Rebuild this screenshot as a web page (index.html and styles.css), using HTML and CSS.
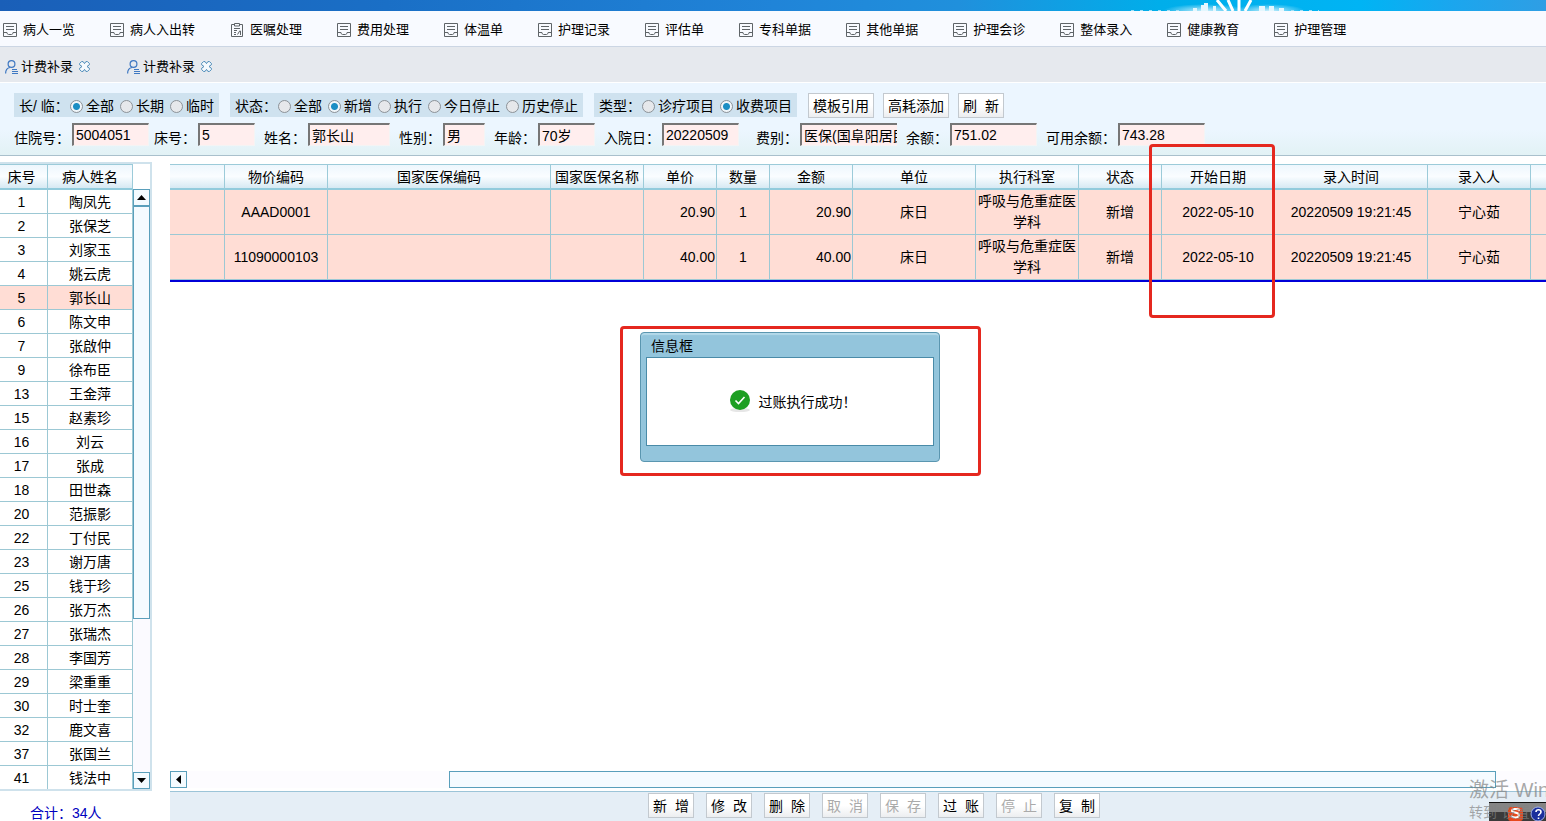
FILE: index.html
```html
<!DOCTYPE html>
<html lang="zh-CN">
	<head>
		<meta charset="UTF-8">
		<title>计费补录</title>
		<link rel="stylesheet" href="styles.css">
	</head>
	<body>
		<!-- 公用图标 -->
		<svg class="defs" width="0" height="0">
			<symbol id="i-doc" viewBox="0 0 14 14">
				<path d="M.5 .5h13v13H.5zM3 3.500h8M3 6.500h8M.5 9.500h3.500v1l1.500 1h3l1.500-1v-1h3.500" fill="none" stroke="#5f6468"/>
			</symbol>
			<symbol id="i-clip" viewBox="0 0 14 14">
				<path d="M4 1.500H1.500v12h11v-12H10M4.500 .5h5v2.500h-5z" fill="none" stroke="#5f6468"/>
				<path d="M4 5.500h6M4 7.500h3M4 9.500h2M4 11.500h2M7.500 11.500l2.500-4M10.500 8v4" fill="none" stroke="#5f6468"/>
			</symbol>
			<symbol id="i-user" viewBox="0 0 13 14">
				<circle cx="6.500" cy="4" r="3.400" fill="none" stroke="#3f78c2" stroke-width="1.200"/>
				<path d="M.6 13.500c0-3.500 1.800-5.500 4.400-6" fill="none" stroke="#3f78c2" stroke-width="1.200"/>
				<path d="M7 9.500h5M7 11.500h6M7 13.500h6" fill="none" stroke="#3f78c2"/>
			</symbol>
			<symbol id="i-close" viewBox="0 0 11 11">
				<path d="M2.500 .6h1.600l1.400 2 1.400-2h1.600l1.900 1.900v1.200L8 5.500l2.400 1.800v1.200l-1.900 1.900H6.900l-1.400-2-1.400 2H2.500L.6 8.500V7.300L3 5.500.6 3.700V2.500z" fill="#f4f9fd" stroke="#4a8ab8"/>
			</symbol>
		</svg>

		<div class="banner">
			<svg class="banner-light" viewBox="0 0 220 11" width="220" height="11">
				<defs>
					<radialGradient id="glow">
						<stop offset="0" stop-color="#fff" stop-opacity=".8"/>
						<stop offset="1" stop-color="#fff" stop-opacity="0"/>
					</radialGradient>
				</defs>
				<ellipse cx="78" cy="11" rx="42" ry="7" fill="url(#glow)"/>
				<ellipse cx="142" cy="11" rx="36" ry="7" fill="url(#glow)"/>
				<path d="M66 11V8h4v3M74 11V5h3V3h4v8M86 11V6h3v5M132 11V6h6v5M142 11V6h5v5M152 11V8h5v3" fill="#e4f7fe"/>
				<path d="M99 11L90 0M106 11L101 0M112 11V0M118 11l6-11" fill="none" stroke="#fff" stroke-width="3"/>
				<path d="M4 10.500h50M164 10.500h28" stroke="#9fe0f8" stroke-dasharray="3 6"/>
			</svg>
		</div>

		<nav class="menu">
			<a href="#"><svg><use href="#i-doc"/></svg>病人一览</a>
			<a href="#"><svg><use href="#i-doc"/></svg>病人入出转</a>
			<a href="#"><svg><use href="#i-clip"/></svg>医嘱处理</a>
			<a href="#"><svg><use href="#i-doc"/></svg>费用处理</a>
			<a href="#"><svg><use href="#i-doc"/></svg>体温单</a>
			<a href="#"><svg><use href="#i-doc"/></svg>护理记录</a>
			<a href="#"><svg><use href="#i-doc"/></svg>评估单</a>
			<a href="#"><svg><use href="#i-doc"/></svg>专科单据</a>
			<a href="#"><svg><use href="#i-doc"/></svg>其他单据</a>
			<a href="#"><svg><use href="#i-doc"/></svg>护理会诊</a>
			<a href="#"><svg><use href="#i-doc"/></svg>整体录入</a>
			<a href="#"><svg><use href="#i-doc"/></svg>健康教育</a>
			<a href="#"><svg><use href="#i-doc"/></svg>护理管理</a>
		</nav>

		<div class="tabs">
			<div class="tab">
				<a href="#"><svg class="user"><use href="#i-user"/></svg>计费补录</a>
				<button type="button" class="close" aria-label="关闭"><svg><use href="#i-close"/></svg></button>
			</div>
			<div class="tab">
				<a href="#"><svg class="user"><use href="#i-user"/></svg>计费补录</a>
				<button type="button" class="close" aria-label="关闭"><svg><use href="#i-close"/></svg></button>
			</div>
		</div>

		<form class="filter">
			<div class="filter-row">
				<div class="group" role="radiogroup" aria-label="长/临">
					<span class="group-name long">长/ 临：</span>
					<label><input type="radio" name="term" checked>全部</label>
					<label><input type="radio" name="term">长期</label>
					<label><input type="radio" name="term">临时</label>
				</div>
				<div class="group" role="radiogroup" aria-label="状态">
					<span class="group-name">状态：</span>
					<label><input type="radio" name="state">全部</label>
					<label><input type="radio" name="state" checked>新增</label>
					<label><input type="radio" name="state">执行</label>
					<label><input type="radio" name="state">今日停止</label>
					<label><input type="radio" name="state">历史停止</label>
				</div>
				<div class="group" role="radiogroup" aria-label="类型">
					<span class="group-name">类型：</span>
					<label><input type="radio" name="kind">诊疗项目</label>
					<label><input type="radio" name="kind" checked>收费项目</label>
				</div>
				<div class="filter-btns">
					<button type="button" class="btn">模板引用</button>
					<button type="button" class="btn">高耗添加</button>
					<button type="button" class="btn">刷&nbsp; 新</button>
				</div>
			</div>
			<div class="info-row">
				<div class="field"><label for="zyh">住院号：</label><input id="zyh" class="w77" type="text" value="5004051"></div>
				<div class="field near"><label for="ch">床号：</label><input id="ch" class="w57" type="text" value="5"></div>
				<div class="field"><label for="xm">姓名：</label><input id="xm" class="w82" type="text" value="郭长山"></div>
				<div class="field"><label for="xb">性别：</label><input id="xb" class="w42" type="text" value="男"></div>
				<div class="field"><label for="nl">年龄：</label><input id="nl" class="w57" type="text" value="70岁"></div>
				<div class="field"><label for="ryr">入院日：</label><input id="ryr" class="w77" type="text" value="20220509"></div>
				<div class="field far"><label for="fb">费别：</label><input id="fb" class="w97" type="text" value="医保(国阜阳居民)"></div>
				<div class="field"><label for="ye">余额：</label><input id="ye" class="w87" type="text" value="751.02"></div>
				<div class="field"><label for="kyye">可用余额：</label><input id="kyye" class="w87" type="text" value="743.28"></div>
			</div>
		</form>

		<div class="main">
			<!-- 左侧病人列表 -->
			<div class="side">
				<div class="side-box">
					<div class="side-list">
						<table class="patients">
							<thead>
								<tr><th class="bed">床号</th><th>病人姓名</th></tr>
							</thead>
							<tbody>
								<tr><td>1</td><td>陶凤先</td></tr>
								<tr><td>2</td><td>张保芝</td></tr>
								<tr><td>3</td><td>刘家玉</td></tr>
								<tr><td>4</td><td>姚云虎</td></tr>
								<tr class="on"><td>5</td><td>郭长山</td></tr>
								<tr><td>6</td><td>陈文申</td></tr>
								<tr><td>7</td><td>张啟仲</td></tr>
								<tr><td>9</td><td>徐布臣</td></tr>
								<tr><td>13</td><td>王金萍</td></tr>
								<tr><td>15</td><td>赵素珍</td></tr>
								<tr><td>16</td><td>刘云</td></tr>
								<tr><td>17</td><td>张成</td></tr>
								<tr><td>18</td><td>田世森</td></tr>
								<tr><td>20</td><td>范振影</td></tr>
								<tr><td>22</td><td>丁付民</td></tr>
								<tr><td>23</td><td>谢万唐</td></tr>
								<tr><td>25</td><td>钱于珍</td></tr>
								<tr><td>26</td><td>张万杰</td></tr>
								<tr><td>27</td><td>张瑞杰</td></tr>
								<tr><td>28</td><td>李国芳</td></tr>
								<tr><td>29</td><td>梁重重</td></tr>
								<tr><td>30</td><td>时士奎</td></tr>
								<tr><td>32</td><td>鹿文喜</td></tr>
								<tr><td>37</td><td>张国兰</td></tr>
								<tr><td>41</td><td>钱法中</td></tr>
							</tbody>
						</table>
					</div>
					<div class="vbar">
						<button type="button" class="arrow" aria-label="向上"><svg viewBox="0 0 9 5" width="9" height="5"><path d="M0 5l4.500-5L9 5z"/></svg></button>
						<div class="vtrack"><div class="vthumb"></div></div>
						<button type="button" class="arrow" aria-label="向下"><svg viewBox="0 0 9 5" width="9" height="5"><path d="M0 0l4.500 5L9 0z"/></svg></button>
					</div>
				</div>
				<div class="total">合计：34人</div>
			</div>

			<!-- 右侧费用明细 -->
			<div class="content">
				<div class="grid-box">
					<table class="fees">
						<colgroup>
							<col class="c55"><col class="c103"><col class="c223"><col class="c93"><col class="c73"><col class="c53"><col class="c83"><col class="c123"><col class="c103"><col class="c83"><col class="c113"><col class="c153"><col class="c103"><col>
						</colgroup>
						<thead>
							<tr><th></th><th>物价编码</th><th>国家医保编码</th><th>国家医保名称</th><th>单价</th><th>数量</th><th>金额</th><th>单位</th><th>执行科室</th><th>状态</th><th>开始日期</th><th>录入时间</th><th>录入人</th><th></th></tr>
						</thead>
						<tbody>
							<tr><td></td><td>AAAD0001</td><td></td><td></td><td class="num">20.90</td><td>1</td><td class="num">20.90</td><td>床日</td><td>呼吸与危重症医学科</td><td>新增</td><td>2022-05-10</td><td>20220509 19:21:45</td><td>宁心茹</td><td></td></tr>
							<tr><td></td><td>11090000103</td><td></td><td></td><td class="num">40.00</td><td>1</td><td class="num">40.00</td><td>床日</td><td>呼吸与危重症医学科</td><td>新增</td><td>2022-05-10</td><td>20220509 19:21:45</td><td>宁心茹</td><td></td></tr>
						</tbody>
					</table>
				</div>
				<div class="hbar">
					<button type="button" class="arrow" aria-label="向左"><svg viewBox="0 0 5 9" width="5" height="9"><path d="M5 0L0 4.500 5 9z"/></svg></button>
					<div class="htrack"><div class="hthumb"></div></div>
				</div>
				<div class="actions">
					<button type="button" class="btn">新&nbsp; 增</button>
					<button type="button" class="btn">修&nbsp; 改</button>
					<button type="button" class="btn">删&nbsp; 除</button>
					<button type="button" class="btn" disabled>取&nbsp; 消</button>
					<button type="button" class="btn" disabled>保&nbsp; 存</button>
					<button type="button" class="btn">过&nbsp; 账</button>
					<button type="button" class="btn" disabled>停&nbsp; 止</button>
					<button type="button" class="btn">复&nbsp; 制</button>
				</div>
			</div>
		</div>

		<!-- 标注框 -->
		<div class="mark mark-date"></div>
		<div class="mark mark-msg">
			<div class="dialog" role="dialog" aria-labelledby="dlg">
				<div class="dialog-title" id="dlg">信息框</div>
				<div class="dialog-body">
					<svg viewBox="0 0 22 24" width="22" height="24">
						<ellipse cx="11" cy="20" rx="10" ry="2" fill="#e6e6e6"/>
						<circle cx="11" cy="10" r="10" fill="#1d9f22"/>
						<path d="M6.500 10.500l3 3L15.500 7" fill="none" stroke="#fff" stroke-width="1.600"/>
					</svg>
					<span>过账执行成功！</span>
				</div>
			</div>
		</div>

		<div class="tray">
			<svg viewBox="0 0 57 19" width="57" height="19">
				<rect width="57" height="19" fill="#111"/>
				<rect y="1" width="57" height="9" fill="#858585"/>
				<rect y="10" width="57" height="9" fill="#3a3a3a"/>
				<rect x="19" y="5" width="15" height="14" rx="3" fill="#e8481c"/>
				<path d="M31 8c-4-2-8-1-8 1s7 1 7 4-5 3-8 1" fill="none" stroke="#fff" stroke-width="2"/>
				<circle cx="49" cy="12" r="7" fill="#1b2f9c" stroke="#9fb0e8"/>
				<path d="M47 10c0-3 5-3 5 0 0 2-2.500 2-2.500 4M49.500 15.500v1.500" fill="none" stroke="#fff" stroke-width="1.600"/>
			</svg>
		</div>
		<div class="watermark">
			<p class="wm-big">激活 Win</p>
			<p class="wm-small">转到“设置</p>
		</div>
	</body>
</html>
```

FILE: styles.css
```css
*{
	padding: 0;
	margin: 0;
	box-sizing: border-box;
}
body{
	position: relative;
	display: flex;
	flex-direction: column;
	height: 100vh;
	overflow: hidden;
	background: #fff;
	color: #000;
	font: 14px/20px "Liberation Sans", "Noto Sans CJK SC", sans-serif;
}
a{
	color: #000;
	text-decoration: none;
}
button, input{
	font: inherit;
	color: inherit;
}
.defs{
	position: absolute;
}

/* 顶部 */
.banner{
	position: relative;
	flex: none;
	height: 11px;
	overflow: hidden;
	background: linear-gradient(90deg, #1a5fb8 0%, #1a6fc6 25%, #2084d8 50%, #2090dc 62%, #00aeea 75%, #00b4f4 88%, #1ba6ee 94%, #2f9ee4 100%);
}
.banner-light{
	position: absolute;
	top: 0;
	left: 73%;
	margin-left: -2px;
}
.menu{
	display: flex;
	flex: none;
	gap: 35px;
	height: 36px;
	padding: 2px 3px 0;
	background: #f8faff;
	border-bottom: 1px solid #ccd6e4;
	font-size: 13px;
}
.menu a{
	display: flex;
	flex: none;
	align-items: center;
	gap: 6px;
}
.menu svg{
	width: 14px;
	height: 14px;
}
.tabs{
	display: flex;
	flex: none;
	gap: 37px;
	height: 35px;
	padding: 4px 5px 0;
	background: #e6e9ee;
	font-size: 13px;
}
.tab, .tab a{
	display: flex;
	align-items: center;
}
.tab{
	gap: 6px;
}
.tab a{
	gap: 3px;
}
.user{
	width: 13px;
	height: 14px;
}
.close{
	display: flex;
	border: 0;
	background: none;
}
.close svg{
	width: 11px;
	height: 11px;
}

/* 查询条件 */
.filter{
	flex: none;
	height: 74px;
	padding: 10px 14px 0;
	border-top: 1px solid #fff;
	border-bottom: 1px solid #a9c0cc;
	background: linear-gradient(#ecf6ff 65%, #e2f2f5);
}
.filter-row{
	display: flex;
	gap: 11px;
	height: 25px;
}
.group{
	display: flex;
	flex: none;
	align-items: center;
	gap: 6px;
	height: 24px;
	padding: 2px 5px 0;
	background: #cfe2ef;
}
.group-name{
	width: 37px;
	white-space: nowrap;
}
.long{
	width: 45px;
}
.group label{
	display: flex;
	align-items: center;
	gap: 3px;
	white-space: nowrap;
}
.group input{
	appearance: none;
	width: 13px;
	height: 13px;
	border: 1px solid #8c9298;
	border-radius: 50%;
	background: #e6e8eb;
}
.group input:checked{
	background: radial-gradient(circle, #1b8ec4 0, #1b8ec4 3px, #f0f6fa 4px);
}
.filter-btns{
	display: flex;
	gap: 9px;
}
.btn{
	min-width: 46px;
	height: 25px;
	padding: 0 4px;
	border: 1px solid #c3c9cf;
	background: linear-gradient(#fff 50%, #eceef0);
	line-height: 25px;
	white-space: nowrap;
}
.btn:disabled{
	color: #aaa;
}
.info-row{
	display: flex;
	height: 28px;
	align-items: flex-end;
}
.field{
	display: flex;
	flex: none;
	align-items: flex-end;
	gap: 2px;
	margin-left: 9px;
}
.field:first-child{
	margin-left: 0;
}
.near{
	margin-left: 5px;
}
.far{
	margin-left: 17px;
}
.field label{
	line-height: 16px;
}
.field input{
	height: 23px;
	padding: 0 2px;
	border: 1px solid #f4f4f4;
	border-top: 2px solid #767676;
	border-left: 2px solid #767676;
	background: #ffeeee;
}
.w42{ width: 42px; }
.w57{ width: 57px; }
.w77{ width: 77px; }
.w82{ width: 82px; }
.w87{ width: 87px; }
.field .w97{
	width: 97px;
	padding-right: 0;
	border-right: 0;
}

/* 主体 */
.main{
	display: flex;
	flex: 1;
	gap: 18px;
	min-height: 0;
	padding-top: 6px;
}
.side{
	display: flex;
	flex: none;
	flex-direction: column;
	width: 152px;
}
.side-box{
	display: flex;
	flex: 1;
	min-height: 0;
	border: 2px solid #cfe2ec;
	border-left: 0;
}
.side-list{
	flex: 1;
	overflow: hidden;
}
table{
	width: 100%;
	border-collapse: separate;
	border-spacing: 0;
	table-layout: fixed;
}
th{
	height: 26px;
	border-top: 1px solid #9ccbd9;
	border-right: 1px solid #9ccbd9;
	border-bottom: 2px solid #92cbdc;
	background: linear-gradient(#eef7fd, #fafdff 50%, #d6e9f3);
	font-weight: normal;
	line-height: 18px;
	white-space: nowrap;
}
td{
	border-right: 1px solid #9cc8d4;
	border-bottom: 1px solid #9cc8d4;
	text-align: center;
}
.bed{
	width: 48px;
}
.patients td{
	height: 24px;
}
.patients td:first-child, .bed{
	padding-right: 4px;
}
.on td{
	background: #ffddd5;
}
.vbar{
	display: flex;
	flex: none;
	flex-direction: column;
	width: 17px;
	padding-top: 25px;
}
.arrow{
	display: flex;
	flex: none;
	align-items: center;
	justify-content: center;
	width: 17px;
	height: 17px;
	border: 1px solid #5a9fbb;
	background: #f4fbff;
}
.vtrack{
	flex: 1;
	background: #fbfaff;
}
.vthumb{
	height: 73%;
	border: 1px solid #5a9fbb;
	background: #f5fbff;
}
.total{
	height: 30px;
	padding-left: 30px;
	color: #0000c0;
	line-height: 44px;
	overflow: hidden;
}
.content{
	display: flex;
	flex: 1;
	flex-direction: column;
	min-width: 0;
}
.grid-box{
	flex: 1;
	padding-top: 2px;
	overflow: hidden;
}
.fees{
	min-width: 1376px;
	border-bottom: 2px solid #0000d8;
}
.fees td{
	height: 45px;
	padding: 0 1px;
	background: #ffddd5;
	line-height: 21px;
}
.fees .num{
	text-align: right;
}
.fees th:last-child, .fees td:last-child{
	border-right: 0;
}
.c53{ width: 53px; }
.c55{ width: 55px; }
.c73{ width: 73px; }
.c83{ width: 83px; }
.c93{ width: 93px; }
.c103{ width: 103px; }
.c113{ width: 113px; }
.c123{ width: 123px; }
.c153{ width: 153px; }
.c223{ width: 223px; }
.hbar{
	display: flex;
	flex: none;
	height: 20px;
}
.htrack{
	flex: 1;
	height: 17px;
	background: #fdfcff;
}
.hthumb{
	width: 77%;
	height: 17px;
	margin-left: 19.3%;
	border: 1px solid #5a9fbb;
	background: #f5fbff;
}
.actions{
	display: flex;
	flex: none;
	justify-content: center;
	gap: 12px;
	height: 30px;
	padding: 1px 0 0 32px;
	border-top: 1px solid #9cc4d8;
	background: #e5eef6;
}

/* 标注与信息框 */
.mark{
	position: absolute;
	border: 3px solid #e5281f;
	border-radius: 4px;
}
.mark-date{
	top: 144px;
	left: 1149px;
	width: 126px;
	height: 174px;
}
.mark-msg{
	top: 326px;
	left: 620px;
	width: 361px;
	height: 150px;
	padding: 3px 17px;
}
.dialog{
	width: 300px;
	height: 130px;
	padding: 0 5px;
	border: 1px solid #5a96b0;
	border-radius: 4px;
	background: #93c5dc;
	box-shadow: inset 0 2px 1px #b4d9e9;
}
.dialog-title{
	height: 24px;
	padding-left: 5px;
	line-height: 26px;
}
.dialog-body{
	display: flex;
	align-items: center;
	justify-content: center;
	gap: 8px;
	height: 89px;
	padding-left: 5px;
	border: 1px solid #4a8ba8;
	background: #fff;
}

/* 右下角 */
.tray{
	position: absolute;
	right: 0;
	bottom: 0;
	height: 19px;
}
.tray svg{
	display: block;
}
.watermark{
	position: absolute;
	right: 0;
	bottom: 0;
	width: 77px;
	height: 43px;
	color: rgba(130, 130, 130, .7);
	white-space: nowrap;
	pointer-events: none;
}
.wm-big{
	font-size: 20px;
	line-height: 24px;
}
.wm-small{
	font-size: 14px;
	line-height: 20px;
}
```
